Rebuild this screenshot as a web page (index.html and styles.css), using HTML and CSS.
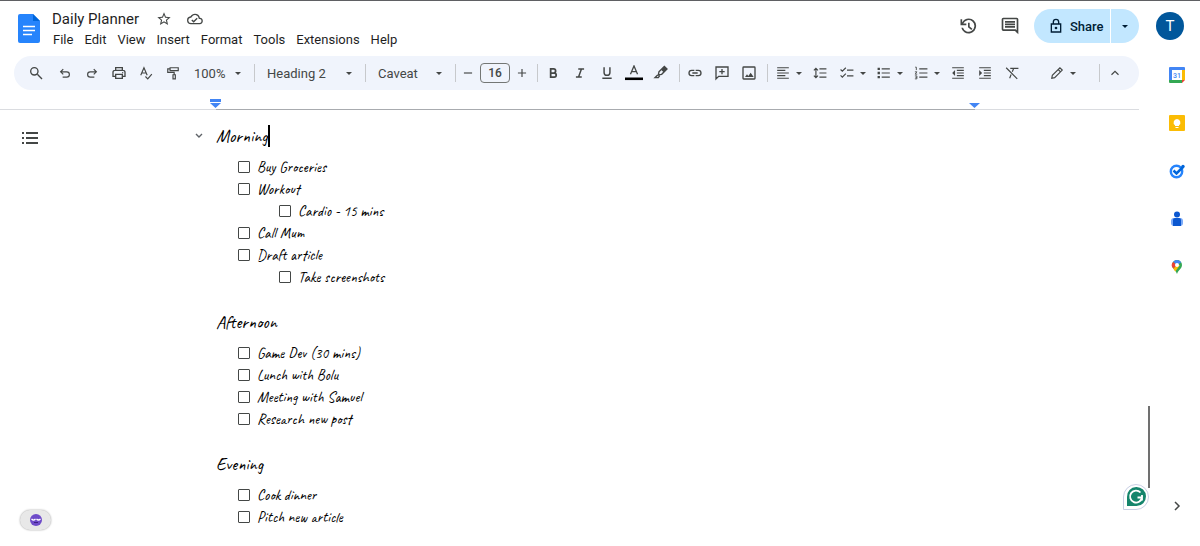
FILE: index.html
```html
<!DOCTYPE html>
<html lang="en">
<head>
	<meta charset="UTF-8">
	<meta name="viewport" content="width=device-width, initial-scale=1">
	<title>Daily Planner</title>
	<link rel="stylesheet" href="styles.css">
</head>
<body>
<header class="header">
	<a class="logo" href="#" aria-label="Docs home">
		<svg width="22" height="29" viewBox="0 0 22 29"><path fill="#2684fc" d="M2 0h13l7 7v20a2 2 0 0 1-2 2H2a2 2 0 0 1-2-2V2a2 2 0 0 1 2-2z"/><path fill="#0066da" d="M15 0l7 7h-7z"/><path stroke="#fff" stroke-width="1.4" d="M5 12.5h12M5 16.5h12M5 20.5h9"/></svg>
	</a>
	<div class="heading">
		<div class="title-row">
			<h1>Daily Planner</h1>
			<button class="plain" aria-label="Star"><svg width="16" height="16" viewBox="0 0 24 24"><path fill="#444746" d="M22 9.24l-7.19-.62L12 2 9.19 8.63 2 9.24l5.46 4.73L5.82 21 12 17.27 18.18 21l-1.63-7.03L22 9.24zM12 15.4l-3.76 2.27 1-4.28-3.32-2.88 4.38-.38L12 6.1l1.71 4.04 4.38.38-3.32 2.88 1 4.28L12 15.4z"/></svg></button>
			<button class="plain" aria-label="Saved to Drive"><svg width="16" height="16" viewBox="0 0 24 24"><path fill="#444746" d="M19.35 10.04A7.49 7.49 0 0 0 12 4C9.11 4 6.6 5.64 5.35 8.04A6 6 0 0 0 6 20h13a5 5 0 0 0 .35-9.96zM19 18H6a4 4 0 0 1-.42-7.98l1.07-.11.5-.95a5.5 5.5 0 0 1 10.24 1.47l.3 1.5 1.53.11A3 3 0 0 1 19 18zm-9-3.2l-2.1-2.1-1.4 1.4L10 17.6l6-6-1.4-1.4z"/></svg></button>
		</div>
		<nav class="menu">
			<button>File</button>
			<button>Edit</button>
			<button>View</button>
			<button>Insert</button>
			<button>Format</button>
			<button>Tools</button>
			<button>Extensions</button>
			<button>Help</button>
		</nav>
	</div>
	<div class="actions">
		<button class="plain" aria-label="Version history"><svg width="20" height="20" viewBox="0 0 24 24"><path fill="#444746" d="M13 3a9 9 0 0 0-8 4.9V4H3v7h7V9H6.3A7 7 0 1 1 6 14H4a9 9 0 1 0 9-11zm-1 5v5.4l4 3.4 1.3-1.5-3.3-2.8V8z"/></svg></button>
		<button class="plain" aria-label="Comments"><svg width="20" height="20" viewBox="0 0 24 24"><path fill="#444746" d="M22 4a2 2 0 0 0-2-2H4a2 2 0 0 0-2 2v12a2 2 0 0 0 2 2h14l4 4V4zm-2 13.2l-1.2-1.2H4V4h16v13.2zM6 12h12v2H6zm0-3h12v2H6zm0-3h12v2H6z"/></svg></button>
		<div class="share">
			<button class="share-main"><svg width="16" height="16" viewBox="0 0 24 24"><path fill="none" stroke="#001d35" stroke-width="2" d="M5 9h14v12H5zM8 9V6a4 4 0 0 1 8 0v3"/><circle cx="12" cy="15" r="2" fill="#001d35"/></svg>Share</button>
			<button class="share-more" aria-label="Share options"><i class="arrow"></i></button>
		</div>
		<button class="avatar" aria-label="Account">T</button>
	</div>
</header>

<div class="body">
	<main class="editor">
		<div class="toolbar">
			<button class="tool search" aria-label="Search"><svg viewBox="0 0 24 24"><circle cx="9.5" cy="9.5" r="5.5"/><path d="M14 14l7 7"/></svg></button>
			<button class="tool" aria-label="Undo"><svg viewBox="0 0 24 24"><path d="M8 19h7a4.5 4.5 0 0 0 0-9H5M9 5.5L4.5 10 9 14.5"/></svg></button>
			<button class="tool" aria-label="Redo"><svg viewBox="0 0 24 24"><path d="M16 19H9a4.5 4.5 0 0 1 0-9h10M15 5.5l4.5 4.5-4.5 4.5"/></svg></button>
			<button class="tool big" aria-label="Print"><svg viewBox="0 0 24 24"><path d="M7 8V4h10v4M6 17H3v-6a3 3 0 0 1 3-3h12a3 3 0 0 1 3 3v6h-3M7 14h10v6H7z"/><circle class="dot" cx="17.5" cy="11.5" r="1"/></svg></button>
			<button class="tool" aria-label="Spelling check"><svg viewBox="0 0 24 24"><path d="M3 16L8.500 3 14 16M5 12h7M11 18l4 4 7-8"/></svg></button>
			<button class="tool" aria-label="Paint format"><svg viewBox="0 0 24 24"><path d="M7 3h14v5H7zM7 5H3v6h11v4M12 15h4v7h-4z"/></svg></button>
			<label class="pick zoom"><select aria-label="Zoom"><option>100%</option></select></label>
			<i class="divider"></i>
			<label class="pick style"><select aria-label="Styles"><option>Heading 2</option></select></label>
			<i class="divider"></i>
			<label class="pick font"><select aria-label="Font"><option>Caveat</option></select></label>
			<i class="divider"></i>
			<button class="tool step" aria-label="Decrease font size"><svg viewBox="0 0 24 24"><path d="M5 12h14"/></svg></button>
			<input class="size" type="text" value="16" aria-label="Font size">
			<button class="tool step" aria-label="Increase font size"><svg viewBox="0 0 24 24"><path d="M5 12h14M12 5v14"/></svg></button>
			<i class="divider"></i>
			<button class="tool" aria-label="Bold"><svg viewBox="0 0 24 24"><path stroke-width="3" d="M8 5h5a3 3 0 0 1 0 7H8zM8 12h6a3.5 3.5 0 0 1 0 7H8z"/></svg></button>
			<button class="tool" aria-label="Italic"><svg viewBox="0 0 24 24"><path stroke-width="2.5" d="M9 5h10M5 19h10M14.500 5l-5 14"/></svg></button>
			<button class="tool" aria-label="Underline"><svg viewBox="0 0 24 24"><path stroke-width="2.5" d="M7 2v9a5 5 0 0 0 10 0V2M4 21h16"/></svg></button>
			<button class="tool" aria-label="Text color"><svg class="wide" viewBox="0 0 28 24"><path d="M8.500 14L14 1l5.500 13M10.500 10h7"/><path stroke="#000" stroke-width="4" d="M0 21h28"/></svg></button>
			<button class="tool big" aria-label="Highlight color"><svg viewBox="0 0 24 24"><path d="M9 10l8-8 4 4-8 8-5 1zM7 15l-4 4h5l2-3"/><path class="dot" d="M12 7l5-5 4 4-5 5z"/></svg></button>
			<i class="divider"></i>
			<button class="tool big" aria-label="Insert link"><svg viewBox="0 0 24 24"><path d="M11 8H7a4 4 0 0 0 0 8h4M13 8h4a4 4 0 0 1 0 8h-4M8 12h8"/></svg></button>
			<button class="tool big" aria-label="Add comment"><svg viewBox="0 0 24 24"><path d="M3 21V3h18v14H7zM12 6v8M8 10h8"/></svg></button>
			<button class="tool big" aria-label="Insert image"><svg viewBox="0 0 24 24"><rect x="3" y="3" width="18" height="18" rx="1"/><path class="dot" d="M6 18l3-4 2 2.500 3.500-5L19 18z"/></svg></button>
			<i class="divider"></i>
			<button class="tool more" aria-label="Align"><svg viewBox="0 0 24 24"><path d="M2 3h20M2 7.500h14M2 12h20M2 16.500h14M2 21h20"/></svg><i class="arrow"></i></button>
			<button class="tool" aria-label="Line spacing"><svg viewBox="0 0 24 24"><path d="M11 5h12M11 12h12M11 19h12M5 4v16M1.500 7.500L5 4l3.500 3.500M1.500 16.500L5 20l3.500-3.500"/></svg></button>
			<button class="tool more" aria-label="Checklist"><svg viewBox="0 0 24 24"><path d="M12 7h11M12 17h11M1 6l3 3 6-6M1 16l3 3 6-6"/></svg><i class="arrow"></i></button>
			<button class="tool more" aria-label="Bulleted list"><svg viewBox="0 0 24 24"><path d="M8 5h14M8 12h14M8 19h14"/><path stroke-width="4" d="M1 5h4M1 12h4M1 19h4"/></svg><i class="arrow"></i></button>
			<button class="tool more" aria-label="Numbered list"><svg viewBox="0 0 24 24"><path d="M9 5h14M9 12h14M9 19h14"/><path stroke-width="1.5" d="M2 2h2v5M1.500 10H5l-3 4h3.500M1.500 17H5v5H1.500M2.500 19.500H5"/></svg><i class="arrow"></i></button>
			<button class="tool" aria-label="Decrease indent"><svg viewBox="0 0 24 24"><path d="M2 3h20M10 7.500h12M10 12h12M10 16.500h12M2 21h20"/><path class="dot" d="M7 7v10l-5-5z"/></svg></button>
			<button class="tool" aria-label="Increase indent"><svg viewBox="0 0 24 24"><path d="M2 3h20M10 7.500h12M10 12h12M10 16.500h12M2 21h20"/><path class="dot" d="M2 7v10l5-5z"/></svg></button>
			<button class="tool" aria-label="Clear formatting"><svg viewBox="0 0 24 24"><path d="M2 3l19 19M9 4h14M15 4l-2.500 6M10.500 14.500L8 21"/></svg></button>
			<div class="mode">
				<button class="tool more" aria-label="Editing mode"><svg viewBox="0 0 24 24"><path d="M3 21l1-5L17 3l4 4L8 20zM14 6l4 4"/></svg><i class="arrow"></i></button>
				<i class="divider"></i>
				<button class="tool" aria-label="Hide the menus"><svg viewBox="0 0 24 24"><path d="M6 15l6-6 6 6"/></svg></button>
			</div>
		</div>

		<div class="ruler">
			<span><svg class="indent" width="11" height="9" viewBox="0 0 11 9"><path fill="#4285f4" d="M0 0h11v3H0zM0 4h11L5.500 9z"/></svg></span>
			<span class="active"><svg class="indent" width="11" height="9" viewBox="0 0 11 9"><path fill="#4285f4" d="M0 4h11L5.500 9z"/></svg></span>
			<span></span>
		</div>

		<div class="canvas">
			<button class="plain outline" aria-label="Show outline"><svg width="16" height="14" viewBox="0 0 16 14"><path stroke="#444746" stroke-width="2" d="M4 2h12M4 7h12M4 12h12M0 2h2M0 7h2M0 12h2"/></svg></button>
			<article class="page">
				<section>
					<h2><button class="plain fold" aria-label="Collapse heading"><svg width="8" height="6" viewBox="0 0 8 6"><path fill="none" stroke="#5f6368" stroke-width="1.4" d="M1 1l3 3 3-3"/></svg></button>Morning<i class="caret"></i></h2>
					<ul>
						<li><label><input type="checkbox">Buy Groceries</label></li>
						<li><label><input type="checkbox">Workout</label>
							<ul>
								<li><label><input type="checkbox">Cardio - 15 mins</label></li>
							</ul>
						</li>
						<li><label><input type="checkbox">Call Mum</label></li>
						<li><label><input type="checkbox">Draft article</label>
							<ul>
								<li><label><input type="checkbox">Take screenshots</label></li>
							</ul>
						</li>
					</ul>
				</section>
				<section>
					<h2>Afternoon</h2>
					<ul>
						<li><label><input type="checkbox">Game Dev (30 mins)</label></li>
						<li><label><input type="checkbox">Lunch with Bolu</label></li>
						<li><label><input type="checkbox">Meeting with Samuel</label></li>
						<li><label><input type="checkbox">Research new post</label></li>
					</ul>
				</section>
				<section>
					<h2>Evening</h2>
					<ul>
						<li><label><input type="checkbox">Cook dinner</label></li>
						<li><label><input type="checkbox">Pitch new article</label></li>
					</ul>
				</section>
			</article>
		</div>
	</main>

	<aside class="rail">
		<button class="plain" aria-label="Calendar"><svg width="16" height="16" viewBox="0 0 16 16"><path fill="#4285f4" d="M1 0h14a1 1 0 0 1 1 1v2H3v10H0V1a1 1 0 0 1 1-1z"/><path fill="#fff" d="M3 3h10v10H3z"/><path fill="#fbbc04" d="M13 3h3v10h-3z"/><path fill="#34a853" d="M0 13h13v3H1a1 1 0 0 1-1-1z"/><path fill="#ea4335" d="M13 13h3l-3 3z"/><text x="8" y="10.5" text-anchor="middle" font-family="Roboto, sans-serif" font-size="7" font-weight="500" fill="#4285f4">31</text></svg></button>
		<button class="plain" aria-label="Keep"><svg width="16" height="16" viewBox="0 0 16 16"><rect width="16" height="16" rx="1" fill="#fbbc04"/><path fill="#fff" d="M8 4a3.500 3.500 0 0 0-2 6.300V11h4v-.7A3.500 3.500 0 0 0 8 4zM6.500 12h3v1h-3z"/></svg></button>
		<button class="plain" aria-label="Tasks"><svg width="16" height="16" viewBox="0 0 16 16"><circle cx="7.5" cy="8.5" r="5.7" fill="none" stroke="#2684fc" stroke-width="2.4"/><path fill="none" stroke="#0066da" stroke-width="2.5" d="M4.500 7.500L7.500 10.500 14 4"/><circle cx="14" cy="3.5" r="1.7" fill="#0066da"/></svg></button>
		<button class="plain" aria-label="Contacts"><svg width="16" height="16" viewBox="0 0 16 16"><circle cx="8" cy="3.5" r="3" fill="#0b57d0"/><rect x="2" y="7" width="12" height="8" rx="3" fill="#7baaf7"/><path fill="#0b57d0" d="M4 9a2 2 0 0 1 2-2h4a2 2 0 0 1 2 2v6H4z"/></svg></button>
		<button class="plain" aria-label="Maps"><svg width="16" height="16" viewBox="0 0 16 16"><path fill="#34a853" d="M3 6a5 5 0 0 1 10 0c0 4-4 5-5 9-1-4-5-5-5-9z"/><path fill="#fbbc04" d="M8 6L4.200 9.500l2 3L11 6z"/><path fill="#ea4335" d="M8 6L4.200 2.700A5 5 0 0 0 4.200 9.500z"/><path fill="#4285f4" d="M8 6L4.200 2.700A5 5 0 0 1 12.200 3.300z"/><circle cx="8" cy="6" r="2" fill="#fff"/></svg></button>
		<button class="plain hide" aria-label="Hide side panel"><svg width="16" height="16" viewBox="0 0 16 16"><path fill="none" stroke="#444746" stroke-width="1.5" d="M6 4l4 4-4 4"/></svg></button>
	</aside>
</div>

<div class="scroll-thumb"></div>
<button class="plain grammarly" aria-label="Grammarly"><svg width="26" height="26" viewBox="0 0 26 26"><path fill="#fff" stroke="#c9cfe4" d="M.5 25.500V13A12.500 12.500 0 1 1 13 25.500z"/><path fill="#15856c" d="M4 22v-9a9.500 9.500 0 1 1 9.500 9z"/><path fill="none" stroke="#fff" stroke-width="1.8" d="M17.500 8.500a6 6 0 1 0 1.500 5h-4.500M19 11v5.500"/></svg></button>
<button class="plain pill" aria-label="Assistant"><svg width="12" height="12" viewBox="0 0 12 12"><circle cx="6" cy="6" r="6" fill="#6e4bc9"/><path fill="none" stroke="#fff" stroke-width="1.2" d="M1.500 5q2 2 4 0M6.500 5q2 2 4 0"/><path fill="none" stroke="#3c2284" d="M4 8.500h4"/></svg></button>
</body>
</html>
```
FILE: styles.css
```css
*{
	box-sizing: border-box;
}
html,body{
	margin: 0;
	padding: 0;
}
body{
	position: relative;
	display: flex;
	flex-direction: column;
	height: 100vh;
	overflow: hidden;
	background-color: #fff;
	color: #1f1f1f;
	font-family: "Google Sans", Roboto, sans-serif;
	font-size: 13px;
}
button,select,input{
	font: inherit;
	color: inherit;
}
button{
	padding: 0;
	border: 0;
	background: none;
	cursor: pointer;
}
svg{
	display: block;
	flex: none;
}
.plain{
	display: flex;
	align-items: center;
	justify-content: center;
}

/* header */
.header{
	display: flex;
	flex: none;
	height: 56px;
	border-top: 1px solid #5f6063;
}
.logo{
	margin: 13px 12px 0 18px;
}
.heading{
	padding-top: 8px;
}
.title-row{
	display: flex;
	align-items: center;
	height: 20px;
	gap: 15px;
}
.title-row h1{
	margin: 0 2px 0 0;
	font-size: 15px;
	font-weight: 400;
}
.menu{
	display: flex;
	gap: 11px;
	height: 20px;
	padding-left: 1px;
}
.actions{
	display: flex;
	align-items: center;
	height: 50px;
	margin-left: auto;
	padding-right: 16px;
}
.actions > .plain{
	margin-right: 22px;
}
.actions > .plain + .share{
	margin-left: -8px;
}
.share{
	display: flex;
	height: 34px;
	margin-right: 17px;
	gap: 1px;
}
.share button{
	background-color: #c2e7ff;
	color: #001d35;
	font-weight: 500;
}
.share-main{
	display: flex;
	align-items: center;
	width: 76px;
	padding-left: 14px;
	gap: 6px;
	border-radius: 17px 0 0 17px;
}
.share .share-more{
	display: flex;
	align-items: center;
	justify-content: center;
	width: 28px;
	border-radius: 0 17px 17px 0;
}
.avatar{
	width: 28px;
	height: 28px;
	border-radius: 50%;
	background-color: #01579b;
	color: #fff;
	font-size: 15px;
}
.arrow,.pick:after{
	display: block;
	border: 3px solid transparent;
	border-top-color: currentColor;
	border-bottom: 0;
}

/* toolbar */
.body{
	display: flex;
	flex: 1;
	min-height: 0;
}
.editor{
	display: flex;
	flex: 1;
	flex-direction: column;
	min-width: 0;
}
.toolbar{
	display: flex;
	flex: none;
	align-items: center;
	height: 34px;
	margin-left: 14px;
	padding: 0 11px 0 7px;
	gap: 1px;
	border-radius: 17px;
	background-color: #f0f4fc;
	color: #444746;
}
.tool{
	display: flex;
	flex: none;
	align-items: center;
	justify-content: center;
	width: 26px;
	height: 26px;
}
.tool svg{
	width: 14px;
	height: 14px;
	fill: none;
	stroke: currentColor;
	stroke-width: 2;
}
.tool.big svg,.tool.search svg{
	width: 16px;
	height: 16px;
}
.tool .wide{
	width: 18px;
	height: 16px;
}
.tool .dot{
	fill: currentColor;
	stroke: none;
}
.tool.search{
	width: 30px;
}
.tool.step{
	width: 20px;
}
.tool.more{
	justify-content: flex-start;
	width: 36px;
	padding-left: 6px;
	gap: 6px;
}
.divider{
	flex: none;
	width: 1px;
	height: 18px;
	margin: 0 1px 0 4px;
	background-color: #c7c9cc;
}
.pick{
	position: relative;
	flex: none;
}
.pick:after{
	content: "";
	position: absolute;
	top: 50%;
	right: 8px;
	margin-top: -1px;
	pointer-events: none;
}
.pick select{
	appearance: none;
	width: 100%;
	height: 26px;
	padding: 0 0 0 10px;
	border: 0;
	background: none;
}
.zoom{
	width: 62px;
}
.zoom select{
	padding-left: 7px;
}
.style{
	width: 103px;
}
.font{
	width: 82px;
}
.size{
	width: 30px;
	height: 20px;
	margin: 0 1px;
	padding: 0;
	border: 1px solid #747775;
	border-radius: 4px;
	background: none;
	font-size: 12px;
	font-weight: 500;
	text-align: center;
}
.mode{
	display: flex;
	align-items: center;
	margin-left: auto;
	gap: 1px;
}
.mode .divider{
	margin-left: 18px;
}

/* ruler */
.ruler{
	display: grid;
	flex: none;
	grid-template-columns: 216px minmax(0, 1fr) 164px;
	height: 20px;
}
.ruler span{
	display: flex;
	align-items: flex-end;
	justify-content: flex-end;
	border-bottom: 1px solid #dadce0;
}
.ruler .active{
	border-color: #a8abaf;
}
.indent{
	margin: 0 -5px 1px 0;
}

/* document */
.canvas{
	display: flex;
	align-items: flex-start;
	min-height: 0;
	padding: 11px 0 0 22px;
}
.outline{
	width: 16px;
	height: 34px;
}
.page{
	padding-left: 178px;
	color: #000;
	font-family: Caveat, cursive;
	font-size: 15px;
}
.page section{
	margin-bottom: 19px;
}
.page h2{
	display: flex;
	position: relative;
	align-items: center;
	height: 30px;
	margin: 0 0 5px;
	font-size: 18px;
	font-weight: 400;
}
.fold{
	position: absolute;
	left: -21px;
}
.caret{
	width: 2px;
	height: 22px;
	background-color: #000;
}
.page ul{
	margin: 0;
	padding: 0 0 0 22px;
	list-style: none;
}
.page ul ul{
	padding-left: 41px;
}
.page label{
	display: flex;
	align-items: center;
	height: 22px;
	gap: 7px;
}
.page input{
	appearance: none;
	width: 12px;
	height: 12px;
	margin: 0;
	border: 1px solid #444746;
	border-radius: 1px;
}

/* side panel */
.rail{
	display: flex;
	flex: none;
	flex-direction: column;
	align-items: center;
	width: 61px;
	padding: 11px 0 32px 14px;
	gap: 32px;
}
.rail .hide{
	margin-top: auto;
}

/* floating */
.scroll-thumb{
	position: absolute;
	right: 50px;
	bottom: 58px;
	width: 2px;
	height: 82px;
	background-color: #707070;
}
.grammarly{
	position: absolute;
	right: 51px;
	bottom: 36px;
}
.pill{
	position: absolute;
	left: 20px;
	bottom: 16px;
	width: 31px;
	height: 20px;
	border-radius: 10px;
	background-color: #e8e8e8;
	box-shadow: 0 0 2px #999;
}
```
